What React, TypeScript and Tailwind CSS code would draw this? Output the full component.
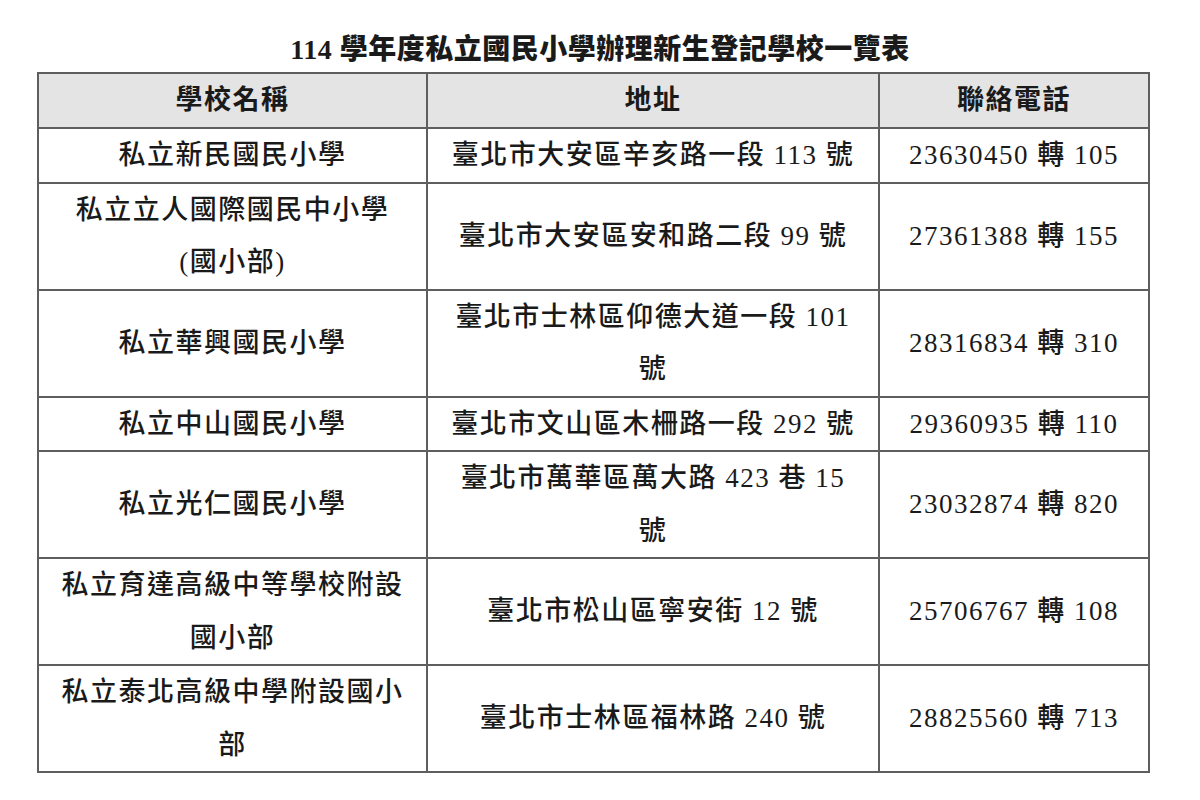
import React from 'react';

type Row = {
    name: React.ReactNode;
    address: React.ReactNode;
    phone: string;
};

const rows: Row[] = [
    { name: '私立新民國民小學', address: '臺北市大安區辛亥路一段 113 號', phone: '23630450 轉 105' },
    {
        name: (<>私立立人國際國民中小學<br />(國小部)</>),
        address: '臺北市大安區安和路二段 99 號',
        phone: '27361388 轉 155',
    },
    {
        name: '私立華興國民小學',
        address: (<>臺北市士林區仰德大道一段 101<br />號</>),
        phone: '28316834 轉 310',
    },
    { name: '私立中山國民小學', address: '臺北市文山區木柵路一段 292 號', phone: '29360935 轉 110' },
    {
        name: '私立光仁國民小學',
        address: (<>臺北市萬華區萬大路 423 巷 15<br />號</>),
        phone: '23032874 轉 820',
    },
    {
        name: (<>私立育達高級中等學校附設<br />國小部</>),
        address: '臺北市松山區寧安街 12 號',
        phone: '25706767 轉 108',
    },
    {
        name: (<>私立泰北高級中學附設國小<br />部</>),
        address: '臺北市士林區福林路 240 號',
        phone: '28825560 轉 713',
    },
];

export default function App() {
    return (
        <div
            className="w-[1200px] h-[800px] bg-white text-[#1a1a1a] overflow-hidden"
            style={{ fontFamily: '"Liberation Serif", "Noto Sans CJK TC", serif' }}
        >
            <h1 className="pt-[32px] pb-[4px] text-center text-[28px] leading-[36px] font-black tracking-[0.5px]">
                114 學年度私立國民小學辦理新生登記學校一覽表
            </h1>

            <table className="ml-[37px] w-[1111px] table-fixed border-collapse text-center text-[27px] tracking-[1.5px] font-medium">
                <colgroup>
                    <col className="w-[389px]" />
                    <col className="w-[452px]" />
                    <col className="w-[270px]" />
                </colgroup>
                <thead>
                    <tr className="bg-[#e4e4e4]">
                        <th className="h-[55px] border-2 border-[#5e5e5e] font-bold leading-[53px]">學校名稱</th>
                        <th className="h-[55px] border-2 border-[#5e5e5e] font-bold leading-[53px]">地址</th>
                        <th className="h-[55px] border-2 border-[#5e5e5e] font-bold leading-[53px]">聯絡電話</th>
                    </tr>
                </thead>
                <tbody>
                    {rows.map((r, i) => (
                        <tr key={i}>
                            <td className="border-2 border-[#5e5e5e] px-2 leading-[52.5px] whitespace-nowrap">{r.name}</td>
                            <td className="border-2 border-[#5e5e5e] px-2 leading-[52.5px] whitespace-nowrap">{r.address}</td>
                            <td className="border-2 border-[#5e5e5e] px-2 leading-[52.5px] whitespace-nowrap">{r.phone}</td>
                        </tr>
                    ))}
                </tbody>
            </table>
        </div>
    );
}
